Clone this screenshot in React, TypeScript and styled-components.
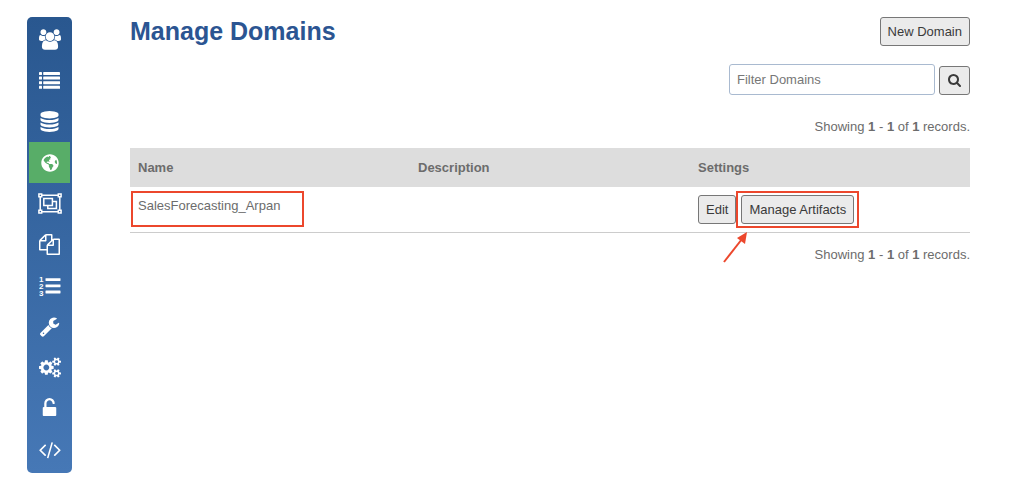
import React from "react";
import styled, { createGlobalStyle } from "styled-components";
import { FaGlobeAmericas } from "react-icons/fa";

const GlobalStyle = createGlobalStyle`
  *, *::before, *::after { box-sizing: border-box; }
  body {
    margin: 0;
    background: #fff;
    color: #6c6c6c;
    font: 13px/22px "Liberation Sans", Arial, sans-serif;
  }
`;

const Page = styled.div`
  display: flex;
  align-items: flex-start;
  gap: 58px;
  padding: 17px 54px 7px 27px;
`;

const Sidebar = styled.nav`
  flex: none;
  width: 45px;
  padding: 2px 2px 3px;
  border-radius: 5px;
  background: linear-gradient(#29578f, #4678b6);
`;

const NavLink = styled.a<{ $active?: boolean }>`
  display: flex;
  align-items: center;
  justify-content: center;
  height: 41px;
  color: #fff;
  background: ${(p) => (p.$active ? "#58ad68" : "transparent")};

  svg {
    display: block;
    fill: currentColor;
  }
`;

const Main = styled.main`
  flex: 1;
  min-width: 0;
`;

const Header = styled.header`
  display: flex;
  align-items: flex-start;
  justify-content: space-between;
`;

const Title = styled.h1`
  margin: 0;
  color: #2b5592;
  font-size: 25px;
  line-height: 28px;
`;

const Button = styled.button`
  display: inline-flex;
  align-items: center;
  justify-content: center;
  height: 29px;
  padding: 0 7px;
  border: 1px solid #777;
  border-radius: 3px;
  background: #ebebeb;
  color: #3a3a3a;
  font: inherit;
  white-space: nowrap;
`;

const IconButton = styled(Button)`
  width: 31px;
  padding: 0;
`;

const FilterForm = styled.form`
  display: flex;
  align-items: flex-end;
  justify-content: flex-end;
  gap: 4px;
  margin-top: 18px;
`;

const FilterInput = styled.input`
  width: 206px;
  height: 31px;
  padding: 0 7px;
  border: 1px solid #a9bad0;
  border-radius: 3px;
  color: #555;
  font: inherit;

  &::placeholder { color: #777; opacity: 1; }
`;

const Records = styled.p`
  margin: 0;
  text-align: right;
`;

const TopRecords = styled(Records)`
  padding: 21px 0 10px;
`;

const BottomRecords = styled(Records)`
  padding-top: 11px;
`;

const Table = styled.table`
  width: 100%;
  table-layout: fixed;
  border-collapse: collapse;
  text-align: left;
`;

const HeadCell = styled.th`
  height: 39px;
  padding: 0 8px;
  background: #ddd;
`;

const Cell = styled.td`
  position: relative;
  padding: 8px;
  border-bottom: 1px solid #ccc;
  vertical-align: top;
`;

const Actions = styled.div`
  display: flex;
  gap: 5px;
`;

const Marked = styled.span`
  position: relative;
  display: flex;
`;

const Outline = styled.span`
  position: absolute;
  border: 2px solid #ec472c;
  pointer-events: none;
`;

const NameOutline = styled(Outline)`
  top: 4px;
  left: 1px;
  width: 173px;
  height: 36px;
`;

const ButtonOutline = styled(Outline)`
  inset: -4px -5px;
`;

const Arrow = styled.svg`
  position: absolute;
  top: 36px;
  left: -19px;
  pointer-events: none;
`;

type GlyphProps = { d: string; box?: string; width: number; height: number };

const Glyph = ({ d, box = "0 0 1792 1792", width, height }: GlyphProps) => (
  <svg viewBox={box} width={width} height={height} fill="currentColor" aria-hidden="true">
    <path d={d} />
  </svg>
);

const users =
  "M593 896q-162 5-265 128h-134q-82 0-138-40.5t-56-118.5q0-353 124-353 6 0 43.5 21t97.5 42.5 119 21.5q67 0 133-23-5 37-5 66 0 139 81 256zm1071 637q0 120-73 189.5t-194 69.5h-874q-121 0-194-69.5t-73-189.5q0-53 3.5-103.5t14-109 26.5-108.5 43-97.5 62-81 85.5-53.5 111.5-20q10 0 43 21.5t73 48 107 48 135 21.5 135-21.5 107-48 73-48 43-21.5q61 0 111.5 20t85.5 53.5 62 81 43 97.5 26.5 108.5 14 109 3.5 103.5zm-1024-1277q0 106-75 181t-181 75-181-75-75-181 75-181 181-75 181 75 75 181zm704 384q0 159-112.5 271.5t-271.5 112.5-271.5-112.5-112.5-271.5 112.5-271.5 271.5-112.5 271.5 112.5 112.5 271.5zm576 225q0 78-56 118.5t-138 40.5h-134q-103-123-265-128 81-117 81-256 0-29-5-66 66 23 133 23 59 0 119-21.5t97.5-42.5 43.5-21q124 0 124 353zm-128-609q0 106-75 181t-181 75-181-75-75-181 75-181 181-75 181 75 75 181z";
const database =
  "M896 768q237 0 443-43t325-127v170q0 69-103 128t-280 93.5-385 34.5-385-34.5-280-93.5-103-128v-170q119 84 325 127t443 43zm0 768q237 0 443-43t325-127v170q0 69-103 128t-280 93.5-385 34.5-385-34.5-280-93.5-103-128v-170q119 84 325 127t443 43zm0-384q237 0 443-43t325-127v170q0 69-103 128t-280 93.5-385 34.5-385-34.5-280-93.5-103-128v-170q119 84 325 127t443 43zm0-1152q208 0 385 34.5t280 93.5 103 128v128q0 69-103 128t-280 93.5-385 34.5-385-34.5-280-93.5-103-128v-128q0-69 103-128t280-93.5 385-34.5z";
const files =
  "M1696 384q40 0 68 28t28 68v1216q0 40-28 68t-68 28h-960q-40 0-68-28t-28-68v-288h-544q-40 0-68-28t-28-68v-672q0-40 20-88t48-76l408-408q28-28 76-48t88-20h416q40 0 68 28t28 68v328q68-40 128-40h416zm-544 213l-299 299h299v-299zm-640-384l-299 299h299v-299zm196 647l316-316v-416h-384v416q0 40-28 68t-68 28h-416v640h512v-256q0-40 20-88t48-76zm956 804v-1152h-384v416q0 40-28 68t-68 28h-416v640h896z";
const wrench =
  "M448 1472q0-26-19-45t-45-19-45 19-19 45 19 45 45 19 45-19 19-45zm644-420l-682 682q-37 37-90 37-52 0-91-37l-106-108q-38-36-38-90 0-53 38-91l681-681q39 98 114.5 173.5t173.5 114.5zm634-435q0 39-23 106-47 134-164.5 217.5t-258.5 83.5q-185 0-316.5-131.5t-131.5-316.5 131.5-316.5 316.5-131.5q58 0 121.5 16.5t107.5 46.5q16 11 16 28t-16 28l-293 169v224l193 107q5-3 79-48.5t135.5-81 70.5-35.5q15 0 23.5 10t8.5 25z";
const cogs =
  "M896 896q0-106-75-181t-181-75-181 75-75 181 75 181 181 75 181-75 75-181zm768 512q0-52-38-90t-90-38-90 38-38 90q0 53 37.5 90.5t90.5 37.5 90.5-37.5 37.5-90.5zm0-1024q0-52-38-90t-90-38-90 38-38 90q0 53 37.5 90.5t90.5 37.5 90.5-37.5 37.5-90.5zm-384 421v185q0 10-7 19.5t-16 10.5l-155 24q-11 35-32 76 34 48 90 115 7 11 7 20 0 12-7 19-23 30-82.5 89.5t-78.5 59.5q-11 0-21-7l-115-90q-37 19-77 31-11 108-23 155-7 24-30 24h-186q-11 0-20-7.5t-10-17.5l-23-153q-34-10-75-31l-118 89q-7 7-20 7-11 0-21-8-144-133-144-160 0-9 7-19 10-14 41-53t47-61q-23-44-35-82l-152-24q-10-1-17-9.5t-7-19.5v-185q0-10 7-19.5t16-10.5l155-24q11-35 32-76-34-48-90-115-7-11-7-20 0-12 7-20 22-30 82-89t79-59q11 0 21 7l115 90q34-18 77-32 11-108 23-154 7-24 30-24h186q11 0 20 7.5t10 17.5l23 153q34 10 75 31l118-89q8-7 20-7 11 0 21 8 144 133 144 160 0 8-7 19-12 16-42 54t-45 60q23 48 34 82l152 23q10 2 17 10.5t7 19.5zm640 533v140q0 16-149 31-12 27-30 52 51 113 51 138 0 4-4 7-122 71-124 71-8 0-46-47t-52-68q-20 2-30 2t-30-2q-14 21-52 68t-46 47q-2 0-124-71-4-3-4-7 0-25 51-138-18-25-30-52-149-15-149-31v-140q0-16 149-31 13-29 30-52-51-113-51-138 0-4 4-7 4-2 35-20t59-34 30-16q8 0 46 46.5t52 67.5q20-2 30-2t30 2q51-71 92-112l6-2q4 0 124 70 4 3 4 7 0 25-51 138 17 23 30 52 149 15 149 31zm0-1024v140q0 16-149 31-12 27-30 52 51 113 51 138 0 4-4 7-122 71-124 71-8 0-46-47t-52-68q-20 2-30 2t-30-2q-14 21-52 68t-46 47q-2 0-124-71-4-3-4-7 0-25 51-138-18-25-30-52-149-15-149-31v-140q0-16 149-31 13-29 30-52-51-113-51-138 0-4 4-7 4-2 35-20t59-34 30-16q8 0 46 46.5t52 67.5q20-2 30-2t30 2q51-71 92-112l6-2q4 0 124 70 4 3 4 7 0 25-51 138 17 23 30 52 149 15 149 31z";
const unlock =
  "M1376 768q40 0 68 28t28 68v576q0 40-28 68t-68 28h-960q-40 0-68-28t-28-68v-576q0-40 28-68t68-28h32v-320q0-185 131.5-316.5t316.5-131.5 316.5 131.5 131.5 316.5q0 26-19 45t-45 19h-64q-26 0-45-19t-19-45q0-106-75-181t-181-75-181 75-75 181v320h736z";
const code =
  "M553 1399l-50 50q-10 10-23 10t-23-10l-466-466q-10-10-10-23t10-23l466-466q10-10 23-10t23 10l50 50q10 10 10 23t-10 23l-393 393 393 393q10 10 10 23t-10 23zm591-1067l-373 1291q-4 13-15.5 19.5t-23.5 2.5l-62-17q-13-4-19.5-15.5t-2.5-24.5l373-1291q4-13 15.5-19.5t23.5-2.5l62 17q13 4 19.5 15.5t2.5 24.5zm657 651l-466 466q-10 10-23 10t-23-10l-50-50q-10-10-10-23t10-23l393-393-393-393q-10-10-10-23t10-23l50-50q10-10 23-10t23 10l466 466q10 10 10 23t-10 23z";
const search =
  "M1216 832q0-185-131.5-316.5t-316.5-131.5-316.5 131.5-131.5 316.5 131.5 316.5 316.5 131.5 316.5-131.5 131.5-316.5zm512 832q0 52-38 90t-90 38q-54 0-90-38l-343-342q-179 124-399 124-143 0-273.5-55.5t-225-150-150-225-55.5-273.5 55.5-273.5 150-225 225-150 273.5-55.5 273.5 55.5 225 150 150 225 55.5 273.5q0 220-124 399l343 343q37 37 37 90z";

const ListIcon = () => (
  <svg viewBox="0 0 21 17" width="21" height="17" aria-hidden="true">
    {[0, 4.6, 9.2, 13.8].map((y) => (
      <React.Fragment key={y}>
        <rect x="0" y={y} width="3" height="3" rx="0.4" />
        <rect x="4.2" y={y} width="16.8" height="3" rx="0.4" />
      </React.Fragment>
    ))}
  </svg>
);

const NumberedListIcon = () => (
  <svg viewBox="0 0 22 22" width="22" height="22" aria-hidden="true">
    {[1, 2, 3].map((n) => (
      <React.Fragment key={n}>
        <text x="0" y={n * 7 - 0.4} fontSize="8" fontWeight="700">
          {n}
        </text>
        <rect x="6.5" y={n * 6.2 - 3} width="15" height="2.8" rx="0.4" />
      </React.Fragment>
    ))}
  </svg>
);

const ObjectGroupIcon = () => (
  <svg viewBox="0 0 24 21" width="24" height="21" aria-hidden="true">
    <g fill="none" stroke="currentColor" strokeWidth="1.5">
      <path d="M4 2.2h16M4 18.8h16M2.2 4v13M21.8 4v13" />
      <path d="M.9.9h2.8v2.8H.9zM20.3.9h2.8v2.8h-2.8zM.9 17.3h2.8v2.8H.9zM20.3 17.3h2.8v2.8h-2.8z" />
      <path d="M5.8 5.4h8.6v7.2H5.8z" />
      <path d="M14.4 8.4h4v7.2H9.8v-3" />
    </g>
  </svg>
);

const navItems = [
  { label: "Users", icon: <Glyph d={users} box="0 0 1920 1792" width={22} height={21} /> },
  { label: "Lists", icon: <ListIcon /> },
  { label: "Databases", icon: <Glyph d={database} width={21} height={21} /> },
  { label: "Domains", icon: <FaGlobeAmericas size={18} />, active: true },
  { label: "Groups", icon: <ObjectGroupIcon /> },
  { label: "Files", icon: <Glyph d={files} width={21} height={21} /> },
  { label: "Sequences", icon: <NumberedListIcon /> },
  { label: "Tools", icon: <Glyph d={wrench} width={21} height={21} /> },
  { label: "Settings", icon: <Glyph d={cogs} box="0 0 1920 1792" width={22} height={21} /> },
  { label: "Access", icon: <Glyph d={unlock} width={21} height={21} /> },
  { label: "Code", icon: <Glyph d={code} box="-30 0 1860 1792" width={22} height={21} /> },
];

const Showing = () => (
  <>
    Showing <b>1</b> - <b>1</b> of <b>1</b> records.
  </>
);

export default function App() {
  return (
    <>
      <GlobalStyle />
      <Page>
        <Sidebar aria-label="Main">
          {navItems.map((item) => (
            <NavLink
              key={item.label}
              href="#"
              aria-label={item.label}
              aria-current={item.active ? "page" : undefined}
              $active={item.active}
            >
              {item.icon}
            </NavLink>
          ))}
        </Sidebar>
        <Main>
          <Header>
            <Title>Manage Domains</Title>
            <Button type="button">New Domain</Button>
          </Header>
          <FilterForm role="search" onSubmit={(e) => e.preventDefault()}>
            <FilterInput type="text" aria-label="Filter Domains" placeholder="Filter Domains" />
            <IconButton type="submit" aria-label="Search">
              <Glyph d={search} box="64 128 1664 1664" width={13} height={13} />
            </IconButton>
          </FilterForm>
          <TopRecords>
            <Showing />
          </TopRecords>
          <Table>
            <thead>
              <tr>
                <HeadCell scope="col">Name</HeadCell>
                <HeadCell scope="col">Description</HeadCell>
                <HeadCell scope="col">Settings</HeadCell>
              </tr>
            </thead>
            <tbody>
              <tr>
                <Cell>
                  SalesForecasting_Arpan
                  <NameOutline />
                </Cell>
                <Cell />
                <Cell>
                  <Actions>
                    <Button type="button">Edit</Button>
                    <Marked>
                      <Button type="button">Manage Artifacts</Button>
                      <ButtonOutline />
                      <Arrow width="28" height="34" viewBox="0 0 28 34" aria-hidden="true">
                        <path d="M2 31L20 8" fill="none" stroke="#ec472c" strokeWidth="2" />
                        <path d="M25 1L23 13L15 7Z" fill="#ec472c" />
                      </Arrow>
                    </Marked>
                  </Actions>
                </Cell>
              </tr>
            </tbody>
          </Table>
          <BottomRecords>
            <Showing />
          </BottomRecords>
        </Main>
      </Page>
    </>
  );
}
